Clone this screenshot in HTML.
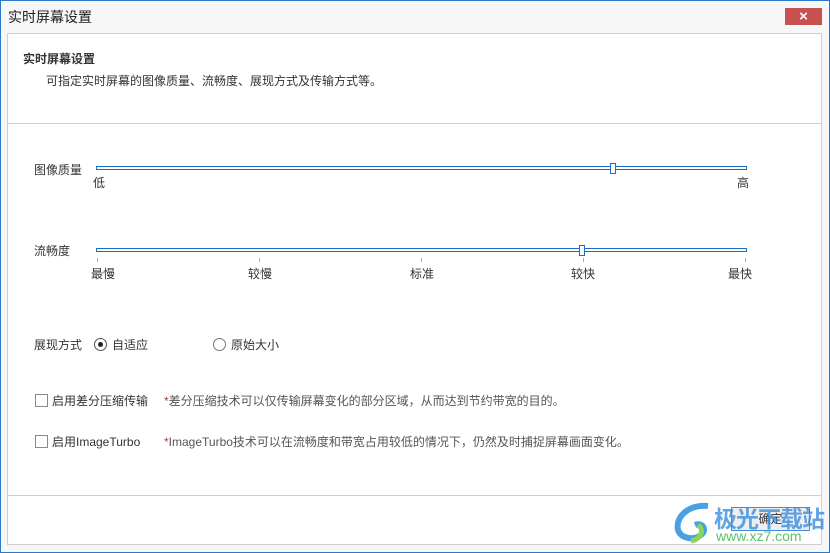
<!DOCTYPE html>
<html><head><meta charset="utf-8"><style>
*{margin:0;padding:0;box-sizing:border-box}
body{width:830px;height:553px;overflow:hidden;background:#f7f7f7;font-family:"Liberation Sans","Noto Sans CJK SC",sans-serif;font-size:12px;color:#333;position:relative}
.win{position:absolute;left:0;top:0;width:830px;height:553px;border:1px solid #2b79c8}
.abs{position:absolute;white-space:nowrap}
.panel{position:absolute;left:7px;top:33px;width:815px;height:512px;background:#fff;border:1px solid #cfcfcf}
.track{position:absolute;left:96px;width:651px;height:4px;border:1px solid #1a6fc4;background:#fff}
.thumb{position:absolute;width:6px;height:11px;border:1px solid #1a6fc4;background:#fff}
.tick{position:absolute;width:1px;height:4px;background:#aaa;top:258px}
.cb{position:absolute;width:13px;height:13px;border:1px solid #888;background:#fff}
.hint{color:#555}
.hint b{color:#c0392b;font-weight:normal}
</style></head><body>
<div class="win"></div>
<div class="abs" style="left:8px;top:7px;font-size:14px;color:#222">实时屏幕设置</div>
<div class="abs" style="left:785px;top:8px;width:37px;height:17px;background:#c75050;color:#fff;text-align:center;font-size:15px;line-height:17px;font-weight:bold">×</div>
<div class="panel"></div>
<div class="abs" style="left:23px;top:50px;font-weight:bold;font-size:12px">实时屏幕设置</div>
<div class="abs" style="left:46px;top:72px">可指定实时屏幕的图像质量、流畅度、展现方式及传输方式等。</div>
<div class="abs" style="left:8px;top:123px;width:813px;height:1px;background:#cfcfcf"></div>

<div class="abs" style="left:34px;top:161px">图像质量</div>
<div class="track" style="top:166px"></div>
<div class="thumb" style="left:610px;top:163px"></div>
<div class="abs" style="left:93px;top:174px">低</div>
<div class="abs" style="left:737px;top:174px">高</div>

<div class="abs" style="left:34px;top:242px">流畅度</div>
<div class="track" style="top:248px"></div>
<div class="thumb" style="left:579px;top:245px"></div>
<div class="tick" style="left:97px"></div>
<div class="tick" style="left:259px"></div>
<div class="tick" style="left:421px"></div>
<div class="tick" style="left:583px"></div>
<div class="tick" style="left:745px"></div>
<div class="abs" style="left:91px;top:265px">最慢</div>
<div class="abs" style="left:248px;top:265px">较慢</div>
<div class="abs" style="left:410px;top:265px">标准</div>
<div class="abs" style="left:571px;top:265px">较快</div>
<div class="abs" style="left:728px;top:265px">最快</div>

<div class="abs" style="left:34px;top:336px">展现方式</div>
<div class="abs" style="left:94px;top:338px;width:13px;height:13px;border:1px solid #555;border-radius:50%"><div style="position:absolute;left:3px;top:3px;width:5px;height:5px;border-radius:50%;background:#222"></div></div>
<div class="abs" style="left:112px;top:336px">自适应</div>
<div class="abs" style="left:213px;top:338px;width:13px;height:13px;border:1px solid #777;border-radius:50%"></div>
<div class="abs" style="left:231px;top:336px">原始大小</div>

<div class="cb" style="left:35px;top:394px"></div>
<div class="abs" style="left:52px;top:392px">启用差分压缩传输</div>
<div class="abs hint" style="left:164px;top:392px"><b>*</b>差分压缩技术可以仅传输屏幕变化的部分区域，从而达到节约带宽的目的。</div>
<div class="cb" style="left:35px;top:435px"></div>
<div class="abs" style="left:52px;top:433px">启用ImageTurbo</div>
<div class="abs hint" style="left:164px;top:433px"><b>*</b>ImageTurbo技术可以在流畅度和带宽占用较低的情况下，仍然及时捕捉屏幕画面变化。</div>

<div class="abs" style="left:8px;top:495px;width:813px;height:1px;background:#cfcfcf"></div>
<div class="abs" style="left:731px;top:507px;width:79px;height:24px;border:1px solid #3c8de0;background:#eee;text-align:center;line-height:22px">确定</div>
<div class="abs" style="left:714px;top:500px;font-size:23px;font-weight:bold;color:#3a8ee0;opacity:.8;letter-spacing:-1px">极光下载站</div>
<div class="abs" style="left:716px;top:528px;font-size:14px;color:#4cba5a;opacity:.9">www.xz7.com</div>
<svg class="abs" style="left:670px;top:502px" width="48" height="44"><path d="M38 4C20 2 5 14 8 28c3 9 17 11 24 4c5-5 0-12-7-9" fill="none" stroke="#4aa0e0" stroke-width="6"/><path d="M28 23c7 5 3 14-7 16" fill="none" stroke="#8fd35a" stroke-width="5"/></svg>
</body></html>
